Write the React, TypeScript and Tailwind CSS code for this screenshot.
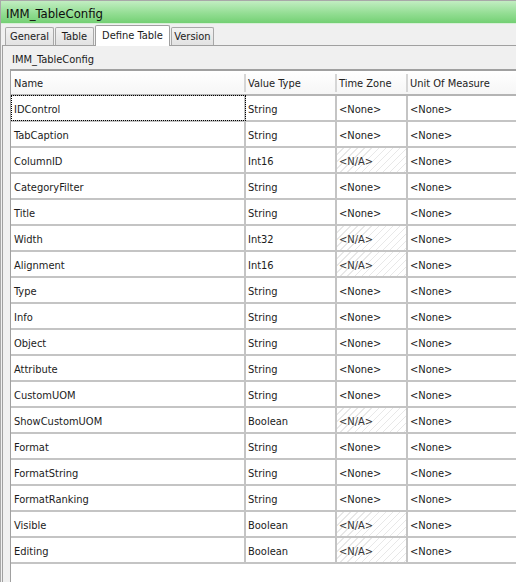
import React from "react";

type Row = { name: string; type: string; tz: "none" | "na" };

const rows: Row[] = [
  { name: "IDControl", type: "String", tz: "none" },
  { name: "TabCaption", type: "String", tz: "none" },
  { name: "ColumnID", type: "Int16", tz: "na" },
  { name: "CategoryFilter", type: "String", tz: "none" },
  { name: "Title", type: "String", tz: "none" },
  { name: "Width", type: "Int32", tz: "na" },
  { name: "Alignment", type: "Int16", tz: "na" },
  { name: "Type", type: "String", tz: "none" },
  { name: "Info", type: "String", tz: "none" },
  { name: "Object", type: "String", tz: "none" },
  { name: "Attribute", type: "String", tz: "none" },
  { name: "CustomUOM", type: "String", tz: "none" },
  { name: "ShowCustomUOM", type: "Boolean", tz: "na" },
  { name: "Format", type: "String", tz: "none" },
  { name: "FormatString", type: "String", tz: "none" },
  { name: "FormatRanking", type: "String", tz: "none" },
  { name: "Visible", type: "Boolean", tz: "na" },
  { name: "Editing", type: "Boolean", tz: "na" },
];

function Tab({ label, w, active }: { label: string; w: string; active?: boolean }) {
  if (active) {
    return (
      <div className={w + " h-[21px] -mb-px pt-[1px] bg-white border border-b-0 border-[#a0a0a0] rounded-t-[2px] flex items-center justify-center text-[11px] text-[#1b1b1b] relative z-10"}>
        {label}
      </div>
    );
  }
  return (
    <div className={w + " h-[18px] pt-[2px] bg-[linear-gradient(#f2f2f2,#e2e2e2)] border border-b-0 border-[#a8a8a8] rounded-t-[2px] flex items-center justify-center text-[11px] text-[#1b1b1b]"}>
      {label}
    </div>
  );
}

export default function App() {
  return (
    <div className="w-[516px] h-[582px] overflow-hidden bg-[#f0f0f0] border-l border-t border-[#a8a8a8] flex flex-col font-['DejaVu_Sans_Condensed','Liberation_Sans',sans-serif] text-[#1b1b1b]">
      <div className="h-[23px] shrink-0 bg-[linear-gradient(#c2edc2,#94de94_55%,#74d074)] border-b border-[#d8efd8] flex items-center pl-[5px] pt-[4px] text-[13px] text-[#0d0d0d]">
        IMM_TableConfig
      </div>
      <div className="h-[21px] shrink-0 flex items-end gap-[1px] pl-[4px]">
        <Tab label="General" w="w-[49px]" />
        <Tab label="Table" w="w-[39px]" />
        <Tab label="Define Table" w="w-[75px]" active />
        <Tab label="Version" w="w-[43px]" />
      </div>
      <div className="flex-1 min-h-0 flex flex-col border-t border-l border-[#a0a0a0] ml-px pl-[7px]">
        <div className="h-[23px] shrink-0 flex items-center pl-[2px] pt-[5px] text-[11px]">
          IMM_TableConfig
        </div>
        <div className="flex-1 min-h-0 bg-white border-t-2 border-l border-[#a0a0a0] flex flex-col text-[11px]">
          <div className="h-[25px] shrink-0 flex items-center bg-[linear-gradient(#ffffff,#f6f6f6)] border-b-2 border-[#b4b4b4] text-[#222]">
            <div className="w-[233px] pl-[3px] pt-[4px]">Name</div>
            <div className="w-[2px] h-[18px] bg-[#d6d6d6]" />
            <div className="w-[89px] pl-[2px] pt-[4px]">Value Type</div>
            <div className="w-[2px] h-[18px] bg-[#d6d6d6]" />
            <div className="w-[69px] pl-[2px] pt-[4px]">Time Zone</div>
            <div className="w-[2px] h-[18px] bg-[#d6d6d6]" />
            <div className="flex-1 pl-[2px] pt-[4px]">Unit Of Measure</div>
          </div>
          {rows.map((r, i) => (
            <div key={r.name} className="h-[26px] shrink-0 flex border-b-2 border-[#c4c4c4]">
              <div className="w-[235px] border-r-2 border-[#c4c4c4] pl-[3px] pt-[4px] flex items-center relative">
                {i === 0 && (
                  <span className="absolute left-0 right-[-2px] top-[-1px] bottom-[-1px] border border-dotted border-black" />
                )}
                {r.name}
              </div>
              <div className="w-[91px] border-r-2 border-[#c4c4c4] pl-[2px] pt-[4px] flex items-center">{r.type}</div>
              <div
                className={
                  "w-[71px] border-r-2 border-[#c4c4c4] pl-[2px] pt-[4px] flex items-center " +
                  (r.tz === "na"
                    ? "bg-[repeating-linear-gradient(135deg,#ffffff_0px,#ffffff_4px,#e8e8e8_4px,#e8e8e8_5px)] text-[#333]"
                    : "")
                }
              >
                {r.tz === "na" ? "<N/A>" : "<None>"}
              </div>
              <div className="flex-1 pl-[2px] pt-[4px] flex items-center">{"<None>"}</div>
            </div>
          ))}
        </div>
      </div>
    </div>
  );
}
